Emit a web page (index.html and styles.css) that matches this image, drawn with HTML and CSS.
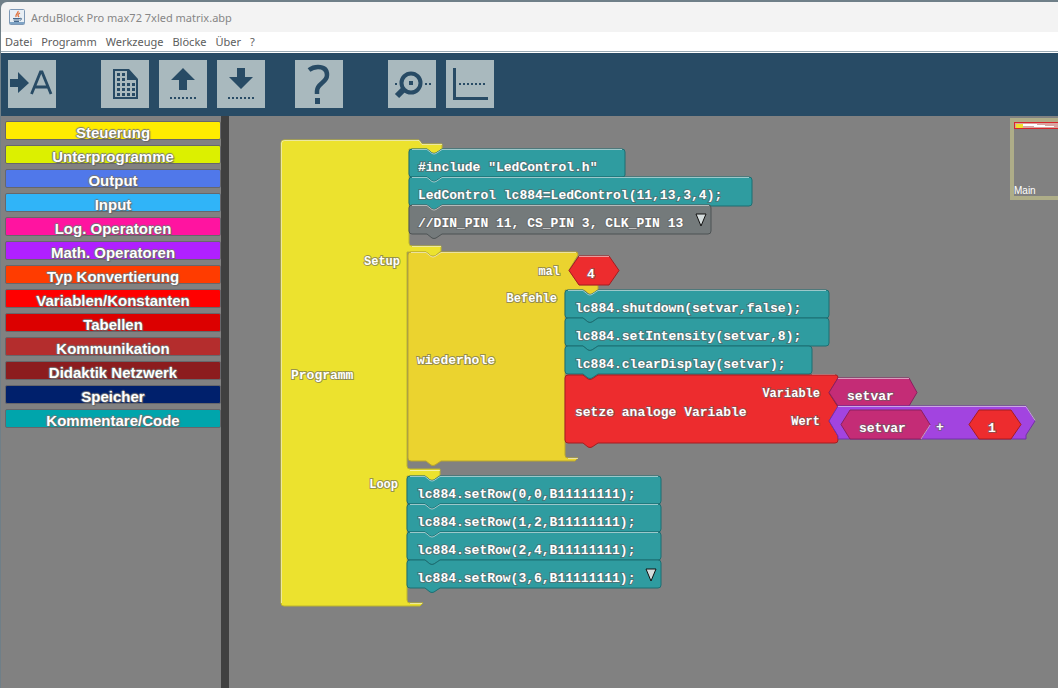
FILE: index.html
```
<!DOCTYPE html>
<html lang="de">
<head>
<meta charset="utf-8">
<title>ArduBlock Pro max72 7xled matrix.abp</title>
<link rel="stylesheet" href="styles.css">
</head>
<body>
<div class="window">
  <header class="titlebar">
    <svg class="app-icon" width="16" height="16" viewBox="0 0 16 16" aria-hidden="true">
      <rect x=".5" y=".5" width="15" height="15" rx="1" fill="#e8eff5" stroke="#7d98b5"/>
      <path d="M1 13h14v2H1z" fill="#7ea3c5"/>
      <path d="M9 2c1 2-3 3-2 6M11 4c-2 1-3 2-1 4" fill="none" stroke="#e0703a" stroke-width="1.3"/>
      <path d="M4 9.500h7M4.500 11h6M5 12.500h5M11 9.500c2-1 2 1 0 2" fill="none" stroke="#47698c"/>
    </svg>
    <span>ArduBlock Pro max72 7xled matrix.abp</span>
  </header>
  <nav class="menubar">
    <button>Datei</button><button>Programm</button><button>Werkzeuge</button><button>Blöcke</button><button>Über</button><button>?</button>
  </nav>
  <div class="toolbar">
    <button class="tool wide-gap" aria-label="Auto-Format">
      <svg viewBox="0 0 48 48"><path d="M2 19h8v-7l11 11-11 10v-6H2z"/><path class="line" d="M23.500 34 32.500 12h1.500l9 22M27 27h13" stroke-width="2.800"/></svg>
    </button>
    <button class="tool" aria-label="Neu">
      <svg viewBox="0 0 48 48"><path fill-rule="evenodd" d="M12 9h16l9 10v20H12zM14 11v26h21V20h-9V11z"/><path class="line" d="M16 14.500h8M16 19.500h8M16 24.500h18M16 29.500h18M16 34.500h18" stroke-width="3" stroke-dasharray="3 2"/></svg>
    </button>
    <button class="tool" aria-label="Öffnen">
      <svg viewBox="0 0 48 48"><path d="M24 8 36 20h-8v10h-8V20h-8z"/><path class="line" d="M11 38h26" stroke-width="2" stroke-dasharray="2 2"/></svg>
    </button>
    <button class="tool mid-gap" aria-label="Speichern">
      <svg viewBox="0 0 48 48"><path d="M20 8h8v9h8L24 29 12 17h8z"/><path class="line" d="M11 38h26" stroke-width="2" stroke-dasharray="2 2"/></svg>
    </button>
    <button class="tool wide-gap" aria-label="Hilfe">
      <svg viewBox="0 0 48 48"><path class="line" d="M14 10q4-3 9-3 9 0 9 8 0 4-5 8-5 4-5 8v3" stroke-width="4.500"/><path d="M20 38h5v6h-5z"/></svg>
    </button>
    <button class="tool" aria-label="Serieller Monitor">
      <svg viewBox="0 0 48 48"><circle class="line" cx="23" cy="23" r="9.500" stroke-width="4"/><path class="line" d="m16 29-7 7" stroke-width="6"/><path d="M21 21h4v4h-4zM7 23h2v2H7zM37 23h2v2h-2zM41 23h2v2h-2z"/></svg>
    </button>
    <button class="tool" aria-label="Plotter">
      <svg viewBox="0 0 48 48"><path d="M7 8h3v29h32v3H7z"/><path class="line" d="M13 24h26" stroke-width="2" stroke-dasharray="2 2"/></svg>
    </button>
  </div>
  <main class="work">
    <aside class="palette">
      <button class="cat steuerung">Steuerung</button>
      <button class="cat unterprogramme">Unterprogramme</button>
      <button class="cat output">Output</button>
      <button class="cat input">Input</button>
      <button class="cat logik">Log. Operatoren</button>
      <button class="cat mathe">Math. Operatoren</button>
      <button class="cat typ">Typ Konvertierung</button>
      <button class="cat variablen">Variablen/Konstanten</button>
      <button class="cat tabellen">Tabellen</button>
      <button class="cat kommunikation">Kommunikation</button>
      <button class="cat didaktik">Didaktik Netzwerk</button>
      <button class="cat speicher">Speicher</button>
      <button class="cat code">Kommentare/Code</button>
    </aside>
    <section class="canvas">
      <svg class="blocks">
        <defs>
          <path id="tip" d="M0 0h10L5 12z"/>
        </defs>
        <g transform="translate(-229 -116)">
          <path class="block program" d="M281 143q0-3 3-3H419l3 4H442V149l-6 4h-4l-5-4H409V243q0 3 3 3H441V251l-6 5h-4l-5-4H407V466q0 3 3 3H440V475l-6 5h-4l-5-4H407V600q0 3 3 3H423l-3 3H284q-3 0-3-3z"/>
          <path class="shine" d="M281.500 603V143q0-2.500 3-2.500H419l3 4h20M412 246.500h29M410 470.500h30M410 603.500h12"/>

          <g class="code-block">
            <path d="M409 152q0-3 3-3h15l5 4q2 1 4 0l6-4H622q3 0 3 3V175q0 2-3 2H442l-6 4q-2 1-4 0l-5-4H412q-3 0-3-3z"/>
            <path d="M409 180q0-3 3-3h15l5 4q2 1 4 0l6-4H749q3 0 3 3V203q0 3-3 3H442l-6 4q-2 1-4 0l-5-4H412q-3 0-3-3z"/>
          </g>
          <path class="block remark" d="M409 208q0-3 3-3h15l5 4q2 1 4 0l6-4H709q2 0 2 3V231q0 3-3 3H442l-6 4q-2 1-4 0l-5-4H412q-3 0-3-3z"/>
          <path class="shine" d="M412 149.500h15l5 4q2 1 4 0l6-4H622M412 177.500h15l5 4q2 1 4 0l6-4H749M412 205.500h15l5 4q2 1 4 0l6-4H709"/>

          <path class="block loop" d="M408 255q0-3 3-3h15l5 4q2 1 4 0l6-4H576q2 0 2 3L569 270 579 285H598V290l-5 4q-2 1-4 0l-5-4H565V455q0 3 3 3H578l-3 3H441l-6 4q-2 1-4 0l-5-4H411q-3 0-3-3z"/>
          <path class="shine" d="M411 252.500h15l5 4q2 1 4 0l6-4H576M568 458.500h10"/>
          <path class="block value" d="M569 270.500 579 256H609L619 270.500 609 285H579z"/>
          <path class="shine" d="M579 256.500h30"/>

          <g class="code-block">
            <path d="M565 293q0-3 3-3h15l5 4q2 1 4 0l6-4H826q3 0 3 3V315q0 3-3 3H598l-6 4q-2 1-4 0l-5-4H568q-3 0-3-3z"/>
            <path d="M565 321q0-3 3-3h15l5 4q2 1 4 0l6-4H826q3 0 3 3V343q0 3-3 3H598l-6 4q-2 1-4 0l-5-4H568q-3 0-3-3z"/>
            <path d="M565 349q0-3 3-3h15l5 4q2 1 4 0l6-4H809q3 0 3 3V371q0 3-3 3H598l-6 4q-2 1-4 0l-5-4H568q-3 0-3-3z"/>
          </g>
          <path class="shine" d="M568 290.500h15l5 4q2 1 4 0l6-4H826M812 374.500h23"/>
          <path class="block value" d="M565 378q0-3 3-3h15l5 4q2 1 4 0l6-4H836q2 0 2 3L829 393 838 407 829 421 838 436V440q0 3-3 3H598l-6 4q-2 1-4 0l-5-4H568q-3 0-3-3z"/>
          <path class="block variable" d="M829 392.500 838 378H909L917 392.500 909 406H838z"/>
          <path class="block math" d="M829 421 838 406H1026L1035 421 1026 435V439H838V436z"/>
          <path class="block variable" d="M841 424.500 850 410H921L930 424.500 921 439H850z"/>
          <path class="block value" d="M969 424.500 979 410H1011L1021 424.500 1011 439H979z"/>
          <path class="shine" d="M838 378.500h71M838 406.500h188l9 14M930 425l-9 14"/>

          <g class="code-block">
            <path d="M407 479q0-3 3-3h15l5 4q2 1 4 0l6-4H658q3 0 3 3V501q0 3-3 3H440l-6 4q-2 1-4 0l-5-4H410q-3 0-3-3z"/>
            <path d="M407 507q0-3 3-3h15l5 4q2 1 4 0l6-4H658q3 0 3 3V529q0 3-3 3H440l-6 4q-2 1-4 0l-5-4H410q-3 0-3-3z"/>
            <path d="M407 535q0-3 3-3h15l5 4q2 1 4 0l6-4H658q3 0 3 3V557q0 3-3 3H440l-6 4q-2 1-4 0l-5-4H410q-3 0-3-3z"/>
            <path d="M407 563q0-3 3-3h15l5 4q2 1 4 0l6-4H658q3 0 3 3V585q0 3-3 3H440l-6 4q-2 1-4 0l-5-4H410q-3 0-3-3z"/>
          </g>
          <path class="shine" d="M410 476.500h15l5 4q2 1 4 0l6-4H658M410 504.500h15l5 4q2 1 4 0l6-4H658M410 532.500h15l5 4q2 1 4 0l6-4H658"/>

          <use href="#tip" x="696" y="214" class="tip"/>
          <use href="#tip" x="646" y="569" class="tip"/>

          <g class="label">
            <text x="291" y="379">Programm</text>
            <text x="418" y="171">#include "LedControl.h"</text>
            <text x="418" y="199">LedControl lc884=LedControl(11,13,3,4);</text>
            <text x="418" y="227">//DIN_PIN 11, CS_PIN 3, CLK_PIN 13</text>
            <text x="417" y="364">wiederhole</text>
            <text x="587" y="278">4</text>
            <text x="575" y="312">lc884.shutdown(setvar,false);</text>
            <text x="575" y="340">lc884.setIntensity(setvar,8);</text>
            <text x="575" y="368">lc884.clearDisplay(setvar);</text>
            <text x="575" y="416">setze analoge Variable</text>
            <text x="847" y="400">setvar</text>
            <text x="859" y="432">setvar</text>
            <text x="936" y="431">+</text>
            <text x="988" y="432">1</text>
            <text x="417" y="498">lc884.setRow(0,0,B11111111);</text>
            <text x="417" y="526">lc884.setRow(1,2,B11111111);</text>
            <text x="417" y="554">lc884.setRow(2,4,B11111111);</text>
            <text x="417" y="582">lc884.setRow(3,6,B11111111);</text>
          </g>
          <g class="label socket">
            <text x="400" y="265">Setup</text>
            <text x="398" y="488">Loop</text>
            <text x="560" y="275">mal</text>
            <text x="557" y="302">Befehle</text>
            <text x="820" y="397">Variable</text>
            <text x="820" y="425">Wert</text>
          </g>
        </g>
      </svg>
      <div class="minimap">
        <svg width="44" height="8" aria-hidden="true"><path d="M1 1h43v5H1z" fill="#d9a4a0"/><path d="M2 2h7v4H2z" fill="#f0e02c"/><path d="M9 2h14v1h8v1h9v1H20V4H9z" fill="#fff"/><path d="M0 .5h44M0 6.500h44M.5 0v7" stroke="#d8262c" fill="none"/></svg>
        <span>Main</span>
      </div>
    </section>
  </main>
</div>
</body>
</html>
```
FILE: styles.css
```
* { box-sizing: border-box; }
body {
  margin: 0;
  font-family: "Noto Sans", "Open Sans", sans-serif;
  font-size: 11px;
  background: #6f7f88;
}
button { font: inherit; border: 0; padding: 0; background: none; cursor: pointer; }
.window {
  display: flex;
  flex-direction: column;
  min-height: 100vh;
  padding: 2px 0 0 1px;
}
.titlebar {
  display: flex;
  align-items: center;
  gap: 6px;
  height: 30px;
  padding-left: 8px;
  background: #f3f3f3;
  border-top-left-radius: 6px;
  color: #868686;
}
.menubar {
  display: flex;
  gap: 9px;
  height: 20px;
  padding-left: 4px;
  background: #fff;
  border-bottom: 1px solid #9aabb5;
  color: #5c5c5c;
}
.menubar button { color: inherit; }
.toolbar {
  display: flex;
  gap: 10px;
  padding: 7px;
  height: 64px;
  border-top: 1px solid #fff;
  background: #284b65;
}
.tool { width: 48px; height: 48px; background: #a9b9be; }
.tool svg { display: block; width: 48px; height: 48px; fill: #284b65; }
.tool .line { fill: none; stroke: #284b65; }
.wide-gap { margin-right: 35px; }
.mid-gap { margin-right: 20px; }
.work { display: flex; flex: 1; background: #818181; }
.palette {
  display: flex;
  flex-direction: column;
  gap: 5px;
  width: 228px;
  flex: none;
  padding: 5px 0 0 4px;
  border-right: 8px solid #404040;
}
.cat {
  height: 19px;
  border: 1px solid #67676b;
  border-radius: 2px;
  line-height: 21px;
  font-family: "Liberation Sans", Arial, sans-serif;
  font-size: 15px;
  font-weight: bold;
  color: #fff;
  text-shadow: 1px 1px 1px #666, -1px 0 1px #777, 0 -1px 1px #777;
}
.steuerung { background: #ffec00; }
.unterprogramme { background: #dcf000; }
.output { background: #5078ea; }
.input { background: #30b4f8; }
.logik { background: #ff14a0; }
.mathe { background: #b020ff; }
.typ { background: #ff3c00; }
.variablen { background: #ff0000; }
.tabellen { background: #dc0000; }
.kommunikation { background: #b42d2d; }
.didaktik { background: #8c1c1e; }
.speicher { background: #00206c; }
.code { background: #00a5ac; }
.canvas { position: relative; flex: 1; min-width: 0; }
.blocks { display: block; width: 100%; height: 100%; min-height: 500px; }
.block, .code-block path { stroke-width: 1; }
.program { fill: #ece22e; stroke: #bdb52f; }
.loop { fill: #ebd32f; stroke: #b9a62e; }
.code-block path { fill: #2f9ca0; stroke: #1d6f73; }
.remark { fill: #747a7b; stroke: #4d5354; }
.value { fill: #ed2c2e; stroke: #a51d20; }
.variable { fill: #c42c76; stroke: #8a2060; }
.math { fill: #a244e0; stroke: #7330a8; }
.shine { fill: none; stroke: #fff; stroke-opacity: .55; }
.tip { fill: #d5dddd; stroke: #111; stroke-width: 1; }
.label {
  font-family: "Liberation Mono", "Courier New", monospace;
  font-size: 13px;
  font-weight: bold;
  fill: #fff;
  stroke: #606060;
  stroke-opacity: .6;
  stroke-width: 2px;
  paint-order: stroke;
  white-space: pre;
}
.socket { font-size: 12px; text-anchor: end; }
.minimap {
  position: absolute;
  top: 2px;
  right: 0;
  display: flex;
  flex-direction: column;
  justify-content: space-between;
  width: 48px;
  height: 82px;
  border: 4px solid #aead88;
  border-right: 0;
  color: #fff;
  font-family: "Liberation Sans", Arial, sans-serif;
  font-size: 10px;
}
```
